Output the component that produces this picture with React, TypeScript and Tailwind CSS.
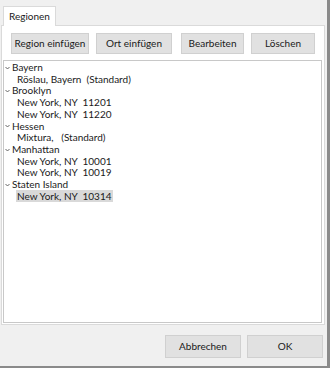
import React, { useState } from 'react';

const tree = [
  { name: 'Bayern', items: ['Röslau, Bayern  (Standard)'] },
  { name: 'Brooklyn', items: ['New York, NY  11201', 'New York, NY  11220'] },
  { name: 'Hessen', items: ['Mixtura,   (Standard)'] },
  { name: 'Manhattan', items: ['New York, NY  10001', 'New York, NY  10019'] },
  { name: 'Staten Island', items: ['New York, NY  10314'] },
];

const Chevron = () => (
  <svg width="5" height="4" viewBox="0 0 5 4" className="mr-[2px] shrink-0">
    <path d="M0.5 1 L2.5 3 L4.5 1" fill="none" stroke="#555" strokeWidth="0.9" />
  </svg>
);

const Button = ({ label, className = '' }: { label: string; className?: string }) => (
  <button className={`h-[21px] bg-[#e1e1e1] border border-[#d0d0d0] text-[10px] text-[#1a1a1a] ${className}`}>
    {label}
  </button>
);

export default function App() {
  const [selected, setSelected] = useState('Staten Island/0');

  return (
    <div
      className="w-[336px] h-[372px] bg-white whitespace-pre"
      style={{ fontFamily: 'Lato, "Noto Sans", sans-serif' }}
    >
      <div className="w-[330px] h-[368px] bg-[#f0f0f0] border-r-[3px] border-b-[2px] border-[#8a8a8a] flex flex-col">
        {/* Tabs */}
        <div className="flex pt-[5px] pl-[3px]">
          <div className="h-[20px] px-[5px] bg-white border border-b-0 border-[#dadada] text-[10px] leading-[18px] text-[#1a1a1a] relative top-[1px]">
            Regionen
          </div>
        </div>
        <div className="mx-[1px] w-[324px] h-[300px] bg-white border border-[#dadada] flex flex-col">
          <div className="flex gap-[7px] pl-[9px] pt-[7px]">
            <Button label="Region einfügen" className="w-[78px]" />
            <Button label="Ort einfügen" className="w-[76px]" />
            <Button label="Bearbeiten" className="w-[63px] ml-[2px]" />
            <Button label="Löschen" className="w-[64px]" />
          </div>
          <div className="mt-[6px] ml-[1px] w-[319px] h-[263px] border border-[#c8c8c8] pt-[1px] text-[10px] leading-[11.7px] text-[#1a1a1a]">
            {tree.map((g) => (
              <div key={g.name}>
                <div className="flex items-center pl-[1px]">
                  <Chevron />
                  <span>{g.name}</span>
                </div>
                {g.items.map((it, i) => {
                  const id = `${g.name}/${i}`;
                  return (
                    <div key={id} className="pl-[12px]" onClick={() => setSelected(id)}>
                      <span className={`px-[1px] ${selected === id ? 'bg-[#d9d9d9]' : ''}`}>{it}</span>
                    </div>
                  );
                })}
              </div>
            ))}
          </div>
        </div>
        <div className="flex justify-end gap-[6px] pr-[4px] mt-[10px]">
          <Button label="Abbrechen" className="w-[76px] h-[23px]" />
          <Button label="OK" className="w-[76px] h-[23px] border-[#4a9be0]" />
        </div>
      </div>
    </div>
  );
}
